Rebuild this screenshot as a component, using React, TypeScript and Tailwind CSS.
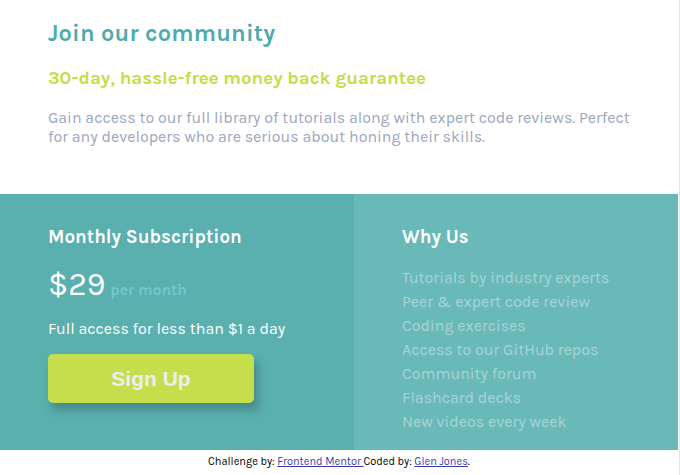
import React from "react";

const items = [
  "Tutorials by industry experts",
  "Peer & expert code review",
  "Coding exercises",
  "Access to our GitHub repos",
  "Community forum",
  "Flashcard decks",
  "New videos every week",
];

export default function App() {
  const font = { fontFamily: "Karla, 'Noto Sans', 'Open Sans', sans-serif" };
  return (
    <div className="w-[680px] h-[475px] bg-white border-r border-[#e4e4e4] overflow-hidden" style={font}>
      <div className="w-[678px]">
        <div className="h-[194px] px-12 pt-[17px]">
          <h1 className="text-[23.5px] leading-[32px] font-bold text-[#4fabab] tracking-[0.2px]">Join our community</h1>
          <h2 className="mt-[17px] text-[18.7px] leading-[24px] font-bold text-[#c4dc45]">30-day, hassle-free money back guarantee</h2>
          <p className="mt-[18px] text-[16px] leading-[19px] text-[#9ca6be]">
            Gain access to our full library of tutorials along with expert code reviews. Perfect for any developers who are serious about honing their skills.
          </p>
        </div>
        <div className="flex h-[256px]">
          <div className="w-[354px] bg-[#5aafaf] px-12 pt-[31px]">
            <h3 className="text-[18.8px] leading-[24px] font-bold text-white">Monthly Subscription</h3>
            <div className="mt-[16px] flex items-baseline gap-[5px]">
              <span className="text-[32px] leading-[40px] text-white">$29</span>
              <span className="text-[15.5px] font-bold text-[#74c7c9]">per month</span>
            </div>
            <p className="mt-[14px] text-[16px] leading-[20px] text-white">Full access for less than $1 a day</p>
            <button
              className="mt-[15px] w-[206px] h-[49px] rounded-[5px] bg-[#c6de4c] text-[#e8eff3] text-[21px] font-bold shadow-[4px_7px_8px_rgba(40,90,90,0.45)]"
              style={{ fontFamily: "'Liberation Sans', Arial, sans-serif" }}
            >
              Sign Up
            </button>
          </div>
          <div className="flex-1 bg-[#6ab9b9] px-12 pt-[31px]">
            <h3 className="text-[18.8px] leading-[24px] font-bold text-white">Why Us</h3>
            <ul className="mt-[17px] flex flex-col">
              {items.map((t) => (
                <li key={t} className="text-[16px] leading-[24px] text-[#a5d5d5]">{t}</li>
              ))}
            </ul>
          </div>
        </div>
        <div className="h-[25px] flex items-center justify-center text-[11px] text-black">
          <span>
            Challenge by: <a className="text-[#3b3bb0] underline" href="#">Frontend Mentor </a>Coded by: <a className="text-[#3b3bb0] underline" href="#">Glen Jones</a>.
          </span>
        </div>
      </div>
    </div>
  );
}
